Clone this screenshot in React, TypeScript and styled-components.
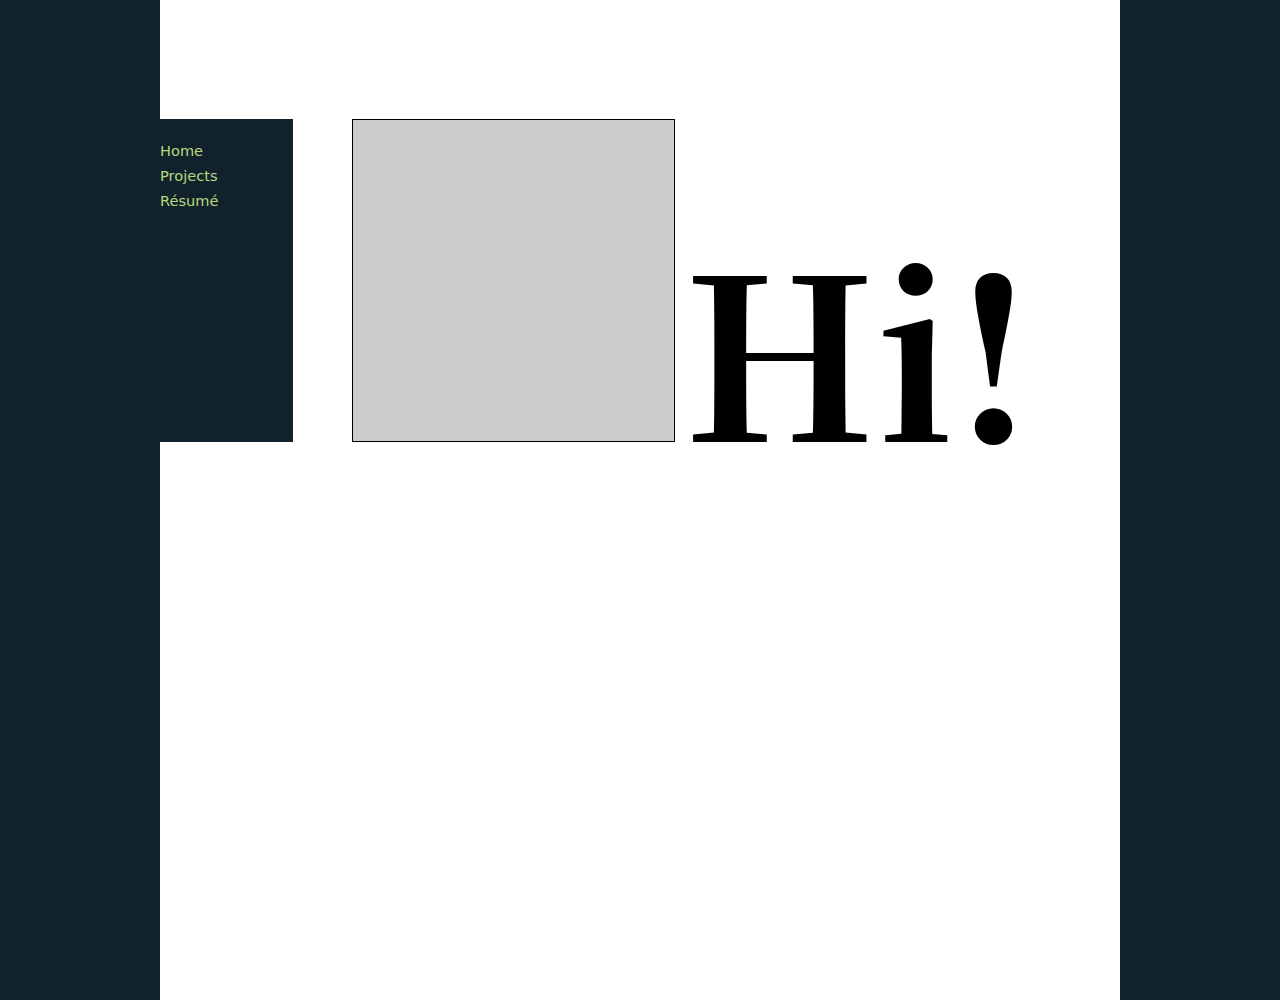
import styled, { createGlobalStyle } from "styled-components";

const GlobalStyle = createGlobalStyle`
  html, body {
    margin: 0;
    padding: 0;
    background-color: #12222c;
  }
`;

const Page = styled.div`
  width: 960px;
  min-height: 1000px;
  margin: 0 auto;
  background-color: #ffffff;
  padding-top: 119px;
  box-sizing: border-box;
`;

const Row = styled.div`
  display: flex;
  gap: 59px;
`;

const SideNav = styled.nav`
  width: 133px;
  height: 323px;
  background-color: #12222c;
  padding-top: 19px;
  box-sizing: border-box;
  display: flex;
  flex-direction: column;
`;

const NavLink = styled.a`
  font-family: "DejaVu Sans", sans-serif;
  font-size: 14.6px;
  line-height: 25px;
  color: #b8d87f;
  text-decoration: none;
`;

const Hero = styled.div`
  display: flex;
  align-items: baseline;
  height: 323px;
`;

const Photo = styled.div`
  width: 323px;
  height: 323px;
  box-sizing: border-box;
  border: 1px solid #000000;
  background-color: #cccccc;
`;

const Greeting = styled.h1`
  margin: 0 0 0 8px;
  font-family: "Noto Serif CJK SC", "Noto Serif", serif;
  font-weight: bold;
  font-size: 224px;
  line-height: 1;
  color: #000000;
`;

function App() {
  return (
    <>
      <GlobalStyle />
      <Page>
        <Row>
          <SideNav>
            <NavLink href="#">Home</NavLink>
            <NavLink href="#">Projects</NavLink>
            <NavLink href="#">Résumé</NavLink>
          </SideNav>
          <Hero>
            <Photo />
            <Greeting>Hi!</Greeting>
          </Hero>
        </Row>
      </Page>
    </>
  );
}
export default App;
